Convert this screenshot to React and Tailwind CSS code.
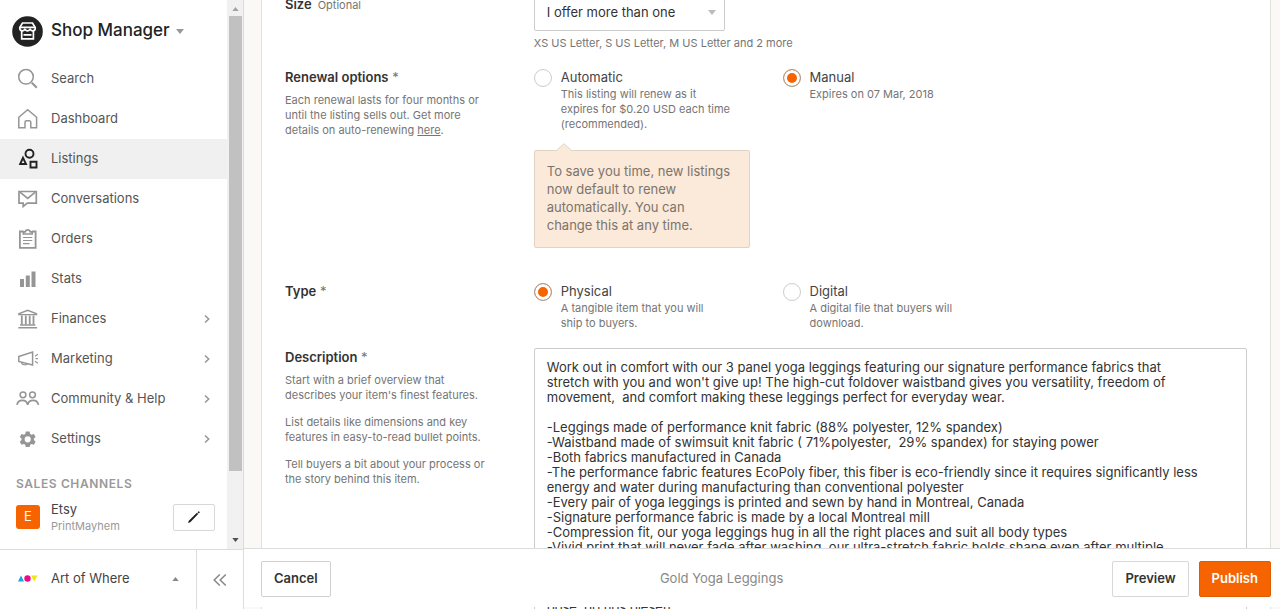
const line = {
  fill: "none",
  stroke: "currentColor",
  strokeWidth: 1.5,
  className: "size-6 shrink-0",
  viewBox: "0 0 24 24",
  "aria-hidden": true,
};

const icons = {
  search: (
    <svg {...line}>
      <circle cx="10" cy="9.800" r="7.300" />
      <path d="M15.800 15.800l5 5" strokeWidth="2" />
    </svg>
  ),
  home: (
    <svg {...line}>
      <path d="M2.800 20.700V10.300L11.700 2.800l8.900 7.500v10.400h-5.800v-5.400a1.500 1.500 0 0 0-1.500-1.500h-2.800a1.500 1.500 0 0 0-1.500 1.500v5.400z" />
    </svg>
  ),
  listings: (
    <svg {...line} strokeWidth="1.900">
      <circle cx="13.500" cy="6.700" r="4" />
      <path d="M4.200 17L7 10.800l3 6.200z" />
      <path d="M14.500 14.700h6v5.800h-6z" />
    </svg>
  ),
  chat: (
    <svg {...line} strokeWidth="1.700">
      <path d="M3 4.500h17.300v11.700h-9L7.200 19.500v-3.300H3z" />
      <path d="M4 5.200l7.700 6.300L19.300 5.200" />
    </svg>
  ),
  orders: (
    <svg {...line}>
      <path d="M7.500 4.500H3.900v16.300h15.700V4.500h-3.600" strokeWidth="1.800" />
      <path d="M7.300 7V4.800h2a2.500 2.500 0 0 1 4.900 0h2V7z" strokeWidth="1.700" />
      <path d="M7 10.500h9.300M7 13.500h9.300M7 16.700h6.500" strokeWidth="1.200" />
    </svg>
  ),
  stats: (
    <svg {...line} fill="currentColor" stroke="none">
      <path d="M4 12h4v8H4zM9.800 8.500h4V20h-4zM15.500 4.500h4V20h-4z" />
    </svg>
  ),
  finances: (
    <svg {...line}>
      <path d="M2.800 7.600V6.800L11.700 3.300l8.900 3.500v.8z" strokeWidth="1.300" />
      <path d="M5.800 8.500v9M9.800 8.500v9M13.700 8.500v9M17.500 8.500v9" strokeWidth="1.800" />
      <path d="M4 18h15.400M2.300 20.800h18.800" />
    </svg>
  ),
  marketing: (
    <svg {...line}>
      <path d="M2.800 9.500l13.800-4.500v13L2.800 14.500z" />
      <path d="M5.500 15.400c.2 2.800 5.500 3 5.800 1.300M19 9.200l3-2M19.500 11.700H22M19 14.300l3 2" strokeWidth="1.200" />
    </svg>
  ),
  people: (
    <svg {...line}>
      <circle cx="7" cy="7.800" r="2.900" />
      <circle cx="16.500" cy="7.800" r="2.900" />
      <path d="M1 17.800c1-6 9.700-6 10.700 0c1-6 9.700-6 10.700 0" strokeWidth="1.700" />
    </svg>
  ),
  settings: (
    <svg {...line} stroke="none" fill="currentColor">
      <path
        fillRule="evenodd"
        d="M9.800 4.500h3.800l.6 2.400 1.300.8 2.400-.8 1.700 3-1.700 1.700v1.400l1.700 1.700-1.700 3-2.400-.8-1.300.8-.6 2.400H9.800l-.6-2.400-1.300-.8-2.400.8-1.700-3L5.500 13v-1.400L3.800 9.900l1.700-3 2.400.8 1.300-.8zM11.700 9.200a3.100 3.100 0 1 0 0 6.200a3.100 3.100 0 0 0 0-6.200z"
      />
    </svg>
  ),
};

const navItems = [
  { label: "Search", icon: "search" },
  { label: "Dashboard", icon: "home" },
  { label: "Listings", icon: "listings", active: true },
  { label: "Conversations", icon: "chat" },
  { label: "Orders", icon: "orders" },
  { label: "Stats", icon: "stats" },
  { label: "Finances", icon: "finances", more: true },
  { label: "Marketing", icon: "marketing", more: true },
  { label: "Community & Help", icon: "people", more: true },
  { label: "Settings", icon: "settings", more: true },
];

const description = `Work out in comfort with our 3 panel yoga leggings featuring our signature performance fabrics that
stretch with you and won't give up! The high-cut foldover waistband gives you versatility, freedom of
movement,  and comfort making these leggings perfect for everyday wear.

-Leggings made of performance knit fabric (88% polyester, 12% spandex)
-Waistband made of swimsuit knit fabric ( 71%polyester,  29% spandex) for staying power
-Both fabrics manufactured in Canada
-The performance fabric features EcoPoly fiber, this fiber is eco-friendly since it requires significantly less
energy and water during manufacturing than conventional polyester
-Every pair of yoga leggings is printed and sewn by hand in Montreal, Canada
-Signature performance fabric is made by a local Montreal mill
-Compression fit, our yoga leggings hug in all the right places and suit all body types
-Vivid print that will never fade after washing, our ultra-stretch fabric holds shape even after multiple
washes

-Machine wash cold, hang to dry
pose, go nos piesen`;

function Triangle({ className, up }) {
  return (
    <svg viewBox="0 0 8 5" fill="currentColor" className={className} aria-hidden="true">
      <path d={up ? "M0 5L4 0l4 5z" : "M0 0h8L4 5z"} />
    </svg>
  );
}

function Sidebar() {
  return (
    <aside className="flex w-61 shrink-0 flex-col border-r border-[#dcdcdc] bg-white">
      <div className="flex min-h-0 flex-1">
        <div className="min-w-0 flex-1 overflow-hidden">
          <button type="button" className="flex h-[59px] items-center pt-[3px] pl-3">
            <svg viewBox="0 0 31 31" className="size-[31px] shrink-0" aria-hidden="true">
              <circle cx="15.500" cy="15.500" r="15.300" fill="#222" />
              <g fill="none" stroke="#fff" strokeWidth="1.700">
                <path d="M10.500 7h10l2.700 4.600v1c0 1.600-1.300 2.300-2.500 2.300s-2-.8-2.600-1.600c-.6.800-1.500 1.600-2.600 1.600s-2-.8-2.600-1.600c-.6.800-1.400 1.600-2.600 1.600s-2.500-.7-2.500-2.300v-1z" />
                <path d="M7.800 11.400h15.400M9.700 15v7.800h11.700V15M11.500 18.900h8" />
              </g>
            </svg>
            <span className="ml-2 text-[17px] font-medium text-[#222]">Shop Manager</span>
            <Triangle className="ml-1.5 h-[5px] w-2 text-[#999]" />
          </button>
          <nav>
            {navItems.map((item) => (
              <a
                key={item.label}
                href="#"
                className={
                  item.active
                    ? "flex h-10 items-center bg-[#f0f0f0] px-4 text-[#222]"
                    : "flex h-10 items-center bg-white px-4 text-[#959595]"
                }
              >
                {icons[item.icon]}
                <span className="ml-[11px] flex-1 text-[13px] text-[#555]">{item.label}</span>
                {item.more && (
                  <svg viewBox="0 0 8 8" className="size-2" fill="none" stroke="currentColor" strokeWidth="1.500" aria-hidden="true">
                    <path d="M2 0.500l3.700 3.500L2 7.500" />
                  </svg>
                )}
              </a>
            ))}
          </nav>
          <h2 className="mt-[17px] pl-4 text-[12px] leading-4 font-semibold tracking-wider text-[#999]">
            SALES CHANNELS
          </h2>
          <div className="mt-2 flex items-center pr-3 pl-4">
            <span className="flex size-6 items-center justify-center rounded-[3px] bg-[#f56400] text-[13px] text-white">
              E
            </span>
            <a href="#" className="ml-[11px] flex-1">
              <span className="block text-[13px] leading-[18px] text-[#444]">Etsy</span>
              <span className="block text-[11px] leading-[16px] text-[#999]">PrintMayhem</span>
            </a>
            <button
              type="button"
              aria-label="Edit sales channel"
              className="flex h-[27px] w-[42px] items-center justify-center rounded-[2px] border border-[#d8d8d8]"
            >
              <svg viewBox="0 0 12 12" className="size-3" fill="#222" aria-hidden="true">
                <path d="M0 12l.8-2.300L8.900 1.800l1.300 1.300L2.300 11.200zM9.500 1.200l.7-.8a.6.6 0 0 1 .8 0l.6.600a.6.6 0 0 1 0 .8l-.8.700z" />
              </svg>
            </button>
          </div>
        </div>
        <div className="flex w-[16px] shrink-0 flex-col items-center bg-[#f1f1f1]">
          <Triangle up className="mt-[7px] mb-[5px] h-1 w-[7px] text-[#a3a3a3]" />
          <div className="h-[455px] w-[13px] bg-[#c1c1c1]" />
          <Triangle className="mt-auto mb-[7px] h-1 w-[7px] text-[#505050]" />
        </div>
      </div>
      <div className="flex h-[60px] shrink-0 border-t border-[#dcdcdc]">
        <button type="button" className="flex flex-1 items-center border-r border-[#dcdcdc] pr-[17px] pb-0.5 pl-[18px]">
          <svg viewBox="0 0 20 7" className="h-[7px] w-5" aria-hidden="true">
            <path d="M0 6.500L3 .5l3 6z" fill="#1ba5e0" />
            <circle cx="9.500" cy="3.500" r="3.200" fill="#ec0a8c" />
            <path d="M13 .5h6.500L16.200 6.500z" fill="#f5e216" />
          </svg>
          <span className="ml-[13px] text-[13px] text-[#444]">Art of Where</span>
          <Triangle up className="ml-auto h-1 w-[7px] text-[#888]" />
        </button>
        <button type="button" aria-label="Collapse sidebar" className="flex w-[46px] items-center justify-center">
          <svg viewBox="0 0 14 12" className="h-3 w-3.5" fill="none" stroke="#888" strokeWidth="1.500" aria-hidden="true">
            <path d="M6.800.5L1.200 6l5.600 5.500M12.800.5L7.200 6l5.600 5.500" />
          </svg>
        </button>
      </div>
    </aside>
  );
}

function Row({ children, className = "" }) {
  return <div className={"grid grid-cols-4 gap-x-[33px] " + className}>{children}</div>;
}

function Help({ children }) {
  return <p className="text-[11px] leading-[15px] text-[#757575]">{children}</p>;
}

function Radio({ id, name, label, hint, checked }) {
  return (
    <div className="flex items-start">
      <input
        type="radio"
        id={id}
        name={name}
        defaultChecked={checked}
        className="mt-0.5 size-[18px] shrink-0 appearance-none rounded-full border border-[#ccc] bg-white checked:border-[#a89b91] checked:bg-[#f56400] checked:shadow-[inset_0_0_0_3px_#fff]"
      />
      <label htmlFor={id} className="ml-[9px] pt-px">
        <span className="block text-[13px] leading-[19px] text-[#444]">{label}</span>
        <span className="block text-[11px] leading-[15px] text-[#757575]">{hint}</span>
      </label>
    </div>
  );
}

function Required() {
  return <span className="font-normal text-[#757575]"> *</span>;
}

export default function App() {
  return (
    <div className="flex h-screen overflow-hidden bg-[#faf9f5] font-['Inter','Liberation_Sans',sans-serif]">
      <Sidebar />
      <main className="relative min-w-0 flex-1 overflow-hidden">
        <form className="-mt-2 mr-[9px] ml-[17px] border-x border-[#e1e1dc] bg-white pr-[23px] pl-[23px]">
          <Row className="mb-4">
            <div className="leading-[22px]">
              <label htmlFor="size" className="text-[13px] font-semibold text-[#333]">
                Size
              </label>
              <span className="ml-1.5 text-[11px] text-[#757575]">Optional</span>
            </div>
            <div className="col-span-3">
              <div className="relative w-[191px]">
                <select
                  id="size"
                  className="h-[39px] w-full appearance-none rounded-[2px] border border-[#ccc] bg-white pt-0.5 pl-3 text-[13px] text-[#333]"
                >
                  <option>I offer more than one</option>
                </select>
                <Triangle className="pointer-events-none absolute top-[18px] right-[9px] h-[5px] w-2 text-[#bbb]" />
              </div>
              <div className="mt-[5px]">
                <Help>XS US Letter, S US Letter, M US Letter and 2 more</Help>
              </div>
            </div>
          </Row>

          <Row className="mb-[33px]">
            <div>
              <h3 className="mb-1.5 text-[13px] leading-5 font-semibold text-[#333]">
                Renewal options
                <Required />
              </h3>
              <Help>
                Each renewal lasts for four months or
                <br />
                until the listing sells out. Get more
                <br />
                details on auto-renewing{" "}
                <a href="#" className="underline">
                  here
                </a>
                .
              </Help>
            </div>
            <div>
              <Radio
                id="automatic"
                name="renewal"
                label="Automatic"
                hint={
                  <>
                    This listing will renew as it
                    <br />
                    expires for $0.20 USD each time
                    <br />
                    (recommended).
                  </>
                }
              />
              <div className="relative mt-[18px] rounded-[2px] border border-[#e0d3c5] bg-[#fbe9d9] px-3 pt-[11px] pb-[13px] text-[13px] leading-[18px] text-[#7d746c]">
                <svg viewBox="0 0 16 8" className="absolute -top-2 left-[21px] h-2 w-4" aria-hidden="true">
                  <path d="M0 8L8 .7 16 8z" fill="#fbe9d9" />
                  <path d="M0 8L8 .7 16 8" fill="none" stroke="#e0d3c5" />
                </svg>
                To save you time, new listings
                <br />
                now default to renew
                <br />
                automatically. You can
                <br />
                change this at any time.
              </div>
            </div>
            <Radio id="manual" name="renewal" label="Manual" hint="Expires on 07 Mar, 2018" checked />
          </Row>

          <Row className="mb-4">
            <h3 className="text-[13px] leading-5 font-semibold text-[#333]">
              Type
              <Required />
            </h3>
            <Radio
              id="physical"
              name="type"
              label="Physical"
              checked
              hint={
                <>
                  A tangible item that you will
                  <br />
                  ship to buyers.
                </>
              }
            />
            <Radio
              id="digital"
              name="type"
              label="Digital"
              hint={
                <>
                  A digital file that buyers will
                  <br />
                  download.
                </>
              }
            />
          </Row>

          <Row>
            <div>
              <label htmlFor="description" className="mb-1.5 block text-[13px] leading-5 font-semibold text-[#333]">
                Description
                <Required />
              </label>
              <div className="space-y-3">
                <Help>
                  Start with a brief overview that
                  <br />
                  describes your item's finest features.
                </Help>
                <Help>
                  List details like dimensions and key
                  <br />
                  features in easy-to-read bullet points.
                </Help>
                <Help>
                  Tell buyers a bit about your process or
                  <br />
                  the story behind this item.
                </Help>
              </div>
            </div>
            <textarea
              id="description"
              rows={20}
              defaultValue={description}
              className="col-span-3 mt-px resize-none overflow-hidden rounded-[2px] border border-[#ccc] px-3 py-[11px] text-[13px] leading-[15px] text-[#333]"
            />
          </Row>
        </form>

        <div className="absolute inset-x-0 bottom-0.5 flex h-[59px] items-center justify-between border-t border-[#dcdcdc] bg-white pt-px pr-[9px] pl-[17px] text-[13px]">
          <button type="button" className="h-9 rounded-[2px] border border-[#d0d0d0] px-3 font-semibold text-[#333]">
            Cancel
          </button>
          <p className="text-[#888]">Gold Yoga Leggings</p>
          <div className="flex gap-2.5">
            <button type="button" className="h-9 rounded-[2px] border border-[#d8d8d8] px-3 font-semibold text-[#333]">
              Preview
            </button>
            <button type="button" className="h-9 rounded-[2px] border border-[#e05c00] bg-[#f56400] px-3 font-semibold text-white">
              Publish
            </button>
          </div>
        </div>
      </main>
    </div>
  );
}
